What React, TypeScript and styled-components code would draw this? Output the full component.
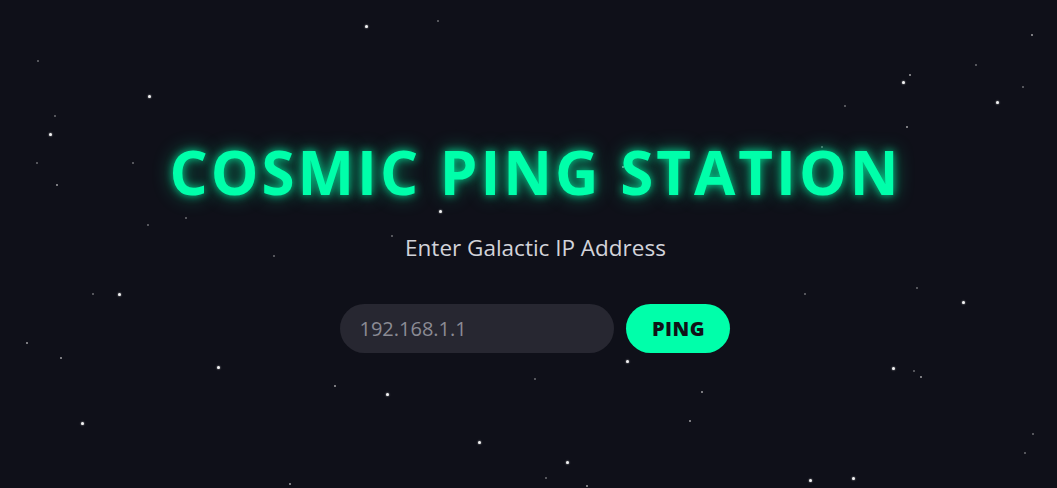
import React from "react";
import styled, { createGlobalStyle } from "styled-components";

const GlobalStyle = createGlobalStyle`
  html, body { margin: 0; padding: 0; background: #0f1019; }
  body { font-family: "Open Sans", "Noto Sans", sans-serif; }
  * { box-sizing: border-box; }
`;

type Star = [number, number, number];
// x, y, level (3 bright, 2 mid, 1 faint)
const STARS: Star[] = [
  [38, 61, 1], [149, 96, 3], [55, 116, 1], [50, 134, 3],
  [1032, 35, 2], [976, 65, 1], [910, 75, 2], [903, 82, 3], [1023, 87, 1],
  [845, 106, 1], [997, 102, 3], [907, 127, 2],
  [366, 26, 3], [438, 21, 1],
  [37, 163, 1], [133, 163, 1], [57, 185, 2], [148, 225, 1], [186, 218, 1],
  [274, 256, 1], [93, 294, 1], [119, 294, 3], [440, 211, 3], [623, 167, 2],
  [822, 147, 1], [392, 236, 1],
  [27, 343, 2], [61, 358, 2], [218, 367, 3], [335, 386, 2], [82, 423, 3], [290, 484, 2],
  [627, 361, 3], [387, 394, 3], [535, 379, 1], [479, 442, 3], [567, 462, 3],
  [546, 478, 1], [587, 486, 2], [690, 421, 2],
  [805, 294, 1], [917, 288, 1], [963, 302, 3],
  [893, 368, 3], [914, 371, 1], [921, 377, 2], [702, 392, 2], [1033, 434, 1],
  [1025, 453, 1], [810, 480, 3], [853, 478, 3],
];

const Page = styled.div`
  position: relative;
  width: 100%;
  height: 100vh;
  min-height: 488px;
  overflow: hidden;
  background: #0f1019;
  display: flex;
  flex-direction: column;
  align-items: center;
  padding-left: 14px;
`;

const Sky = styled.div`
  position: absolute;
  inset: 0;
  pointer-events: none;
`;

const Dot = styled.span<{ $level: number }>`
  position: absolute;
  border-radius: 50%;
  background: #ffffff;
  width: ${(p) => (p.$level === 3 ? 3 : p.$level === 2 ? 2 : 1.5)}px;
  height: ${(p) => (p.$level === 3 ? 3 : p.$level === 2 ? 2 : 1.5)}px;
  opacity: ${(p) => (p.$level === 3 ? 0.95 : p.$level === 2 ? 0.6 : 0.35)};
  box-shadow: ${(p) => (p.$level === 3 ? "0 0 2px rgba(255,255,255,0.8)" : "none")};
`;

const Content = styled.main`
  position: relative;
  z-index: 1;
  display: flex;
  flex-direction: column;
  align-items: center;
  padding-top: 134px;
`;

const Title = styled.h1`
  margin: 0;
  font-family: "Open Sans", "Noto Sans", sans-serif;
  font-weight: 700;
  font-size: 60px;
  line-height: 76px;
  letter-spacing: 3px;
  color: #00ffaa;
  text-shadow: 0 0 9px rgba(0, 255, 170, 0.75), 0 0 20px rgba(0, 255, 170, 0.45);
  white-space: nowrap;
`;

const Subtitle = styled.p`
  margin: 23px 0 0;
  font-size: 22.5px;
  line-height: 30px;
  color: #d2d3da;
`;

const Form = styled.form`
  display: flex;
  gap: 12px;
  margin-top: 41px;
`;

const Input = styled.input`
  width: 274px;
  height: 49px;
  border: none;
  outline: none;
  border-radius: 25px;
  background: #272731;
  padding: 0 19px;
  font-family: "Open Sans", "Noto Sans", sans-serif;
  font-size: 20px;
  color: #e0e0e6;
  &::placeholder { color: #8b8b94; }
`;

const Button = styled.button`
  width: 104px;
  height: 49px;
  border: none;
  border-radius: 25px;
  background: #00ffaa;
  color: #111218;
  font-family: "Open Sans", "Noto Sans", sans-serif;
  font-weight: 800;
  font-size: 20px;
  letter-spacing: 0.5px;
  cursor: pointer;
`;

export default function App() {
  return (
    <>
      <GlobalStyle />
      <Page>
        <Sky>
          {STARS.map(([x, y, l], i) => (
            <Dot key={i} $level={l} style={{ left: x - 1, top: y - 1 }} />
          ))}
        </Sky>
        <Content>
          <Title>COSMIC PING STATION</Title>
          <Subtitle>Enter Galactic IP Address</Subtitle>
          <Form onSubmit={(e) => e.preventDefault()}>
            <Input placeholder="192.168.1.1" />
            <Button type="submit">PING</Button>
          </Form>
        </Content>
      </Page>
    </>
  );
}
